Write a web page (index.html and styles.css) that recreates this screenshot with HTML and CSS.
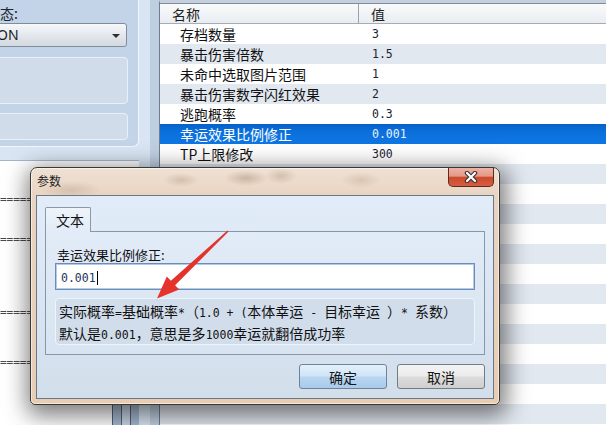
FILE: index.html
```html
<!DOCTYPE html>
<html lang="zh-CN">
<head>
    <meta charset="UTF-8">
    <title>参数</title>
    <link rel="stylesheet" href="styles.css">
</head>
<body>

    <div class="screen">
        <aside class="side">
            <div class="group">
                <div class="group-label">状态:</div>
                <div class="combo"><span class="combo-text">ON</span><span class="combo-arrow"></span></div>
                <div class="group-box tall"></div>
                <div class="group-box"></div>
            </div>
            <div class="editor">
                <div class="rule r1">==========</div>
                <div class="rule r2">==========</div>
                <div class="rule r3">==========</div>
                <div class="rule r4">==========</div>
                <div class="strip"><span></span><span></span><span></span></div>
            </div>
        </aside>

        <div class="splitter"></div>

        <section class="grid">
            <div class="grid-head">
                <div class="col-name">名称</div>
                <div class="col-val">值</div>
            </div>
            <div class="row"><span class="name">存档数量</span><span class="val">3</span></div>
            <div class="row"><span class="name">暴击伤害倍数</span><span class="val">1.5</span></div>
            <div class="row"><span class="name">未命中选取图片范围</span><span class="val">1</span></div>
            <div class="row"><span class="name">暴击伤害数字闪红效果</span><span class="val">2</span></div>
            <div class="row"><span class="name">逃跑概率</span><span class="val">0.3</span></div>
            <div class="row sel"><span class="name">幸运效果比例修正</span><span class="val">0.001</span></div>
            <div class="row"><span class="name">TP上限修改</span><span class="val">300</span></div>
            <div class="row"></div>
            <div class="row"></div>
            <div class="row"></div>
            <div class="row"></div>
            <div class="row"></div>
            <div class="row"></div>
            <div class="row"></div>
            <div class="row"></div>
            <div class="row"></div>
            <div class="row"></div>
            <div class="row"></div>
            <div class="row"></div>
            <div class="row"></div>
        </section>
    </div>

    <!-- dialog window on top -->
    <div class="dialog">
        <div class="titlebar">
            <span class="title">参数</span>
            <span class="close">
                <svg width="16" height="12" viewBox="0 0 16 12">
                    <path d="M4 2 L12 10 M12 2 L4 10" stroke="#3a3a3a" stroke-width="4.5" stroke-linecap="round"/>
                    <path d="M4 2 L12 10 M12 2 L4 10" stroke="#ffffff" stroke-width="2.2" stroke-linecap="round"/>
                </svg>
            </span>
        </div>
        <div class="client">
            <div class="tabs"><span class="tab">文本</span></div>
            <div class="tab-panel">
                <div class="field-label">幸运效果比例修正:</div>
                <div class="textbox"><span class="mono caret">0.001</span></div>
                <div class="info">
                    <div>实际概率<span class="mono">=</span>基础概率<span class="mono">*</span>（<span class="mono">1.0 + (</span>本体幸运<span class="mono"> - </span>目标幸运<span class="mono"> </span>）<span class="mono">* </span>系数）</div>
                    <div>默认是<span class="mono">0.001</span>，意思是多<span class="mono">1000</span>幸运就翻倍成功率</div>
                </div>
            </div>
            <div class="buttons">
                <button class="btn ok">确定</button>
                <button class="btn">取消</button>
            </div>
        </div>
    </div>

    <svg class="arrow" width="606" height="425" viewBox="0 0 606 425">
        <polygon points="227.5,230.4 228.6,231.6 175.1,285.2 179.2,289.5 157,298.5 166.8,276.5 170.9,280.8" fill="#e5332c"/>
    </svg>

</body>
</html>
```

FILE: styles.css
```css
body {
    margin: 0;
    width: 606px;
    height: 425px;
    overflow: hidden;
    position: relative;
    font-family: "Noto Sans CJK SC", sans-serif;
    font-size: 14px;
    color: #111;
}

.mono {
    font-family: "DejaVu Sans Mono", monospace;
    font-size: 11.5px;
    white-space: pre;
}

.screen {
    display: grid;
    grid-template-columns: 150px 9px 1fr;
    height: 425px;
}

/* left side panels */
.side {
    background-color: #d9e5f3;
    display: flex;
    flex-direction: column;
}

.group {
    width: 139px;
    height: 147px;
    box-sizing: border-box;
    background-color: #c3d4e8;
    border-right: 1px solid #f2f7fc;
    border-bottom: 1px solid #f2f7fc;
    border-bottom-right-radius: 6px;
    padding-top: 5px;
}

.group-label {
    line-height: 16px;
    margin-left: -14px;
    color: #1d2530;
}

.combo {
    margin: 2px 0 0 -4px;
    width: 131px;
    height: 24px;
    box-sizing: border-box;
    border: 1px solid #7f8c9c;
    border-radius: 3px;
    background: linear-gradient(#f6f8fa, #e4e8ed 50%, #d3d9e0);
    display: flex;
    align-items: center;
    justify-content: space-between;
    padding: 0 6px 0 0;
}

.combo-text {
    font-family: "Noto Sans", sans-serif;
    font-size: 14px;
    line-height: 22px;
    margin-left: 0;
    color: #1b1b1b;
}

.combo-arrow {
    width: 0;
    height: 0;
    border-left: 4px solid transparent;
    border-right: 4px solid transparent;
    border-top: 4px solid #2e2e2e;
    margin-top: 1px;
}

.group-box {
    margin: 9px 0 0 -4px;
    width: 132px;
    height: 27px;
    box-sizing: border-box;
    background-color: #d1dcea;
    border: 1px solid #e9f0f8;
    border-radius: 4px;
}

.group-box.tall {
    margin-top: 10px;
    height: 47px;
}

.editor {
    margin-top: 13px;
    width: 139px;
    flex: 1;
    background-color: #fff;
    border-top: 1px solid #a3b7cf;
    display: flex;
    flex-direction: column;
}

.rule {
    font-family: "DejaVu Sans Mono", monospace;
    font-size: 11px;
    line-height: 12px;
    height: 12px;
    color: #4a4a4a;
    overflow: hidden;
    white-space: nowrap;
}

.r1 { margin-top: 33px; }
.r2 { margin-top: 28px; }
.r3 { margin-top: 61px; }
.r4 { margin-top: 38px; }

.strip {
    margin-top: auto;
    margin-left: 112px;
    height: 20px;
    display: flex;
}

.strip span {
    width: 12px;
    border-left: 1px solid #556270;
    background-color: #a5b9d1;
}

.strip span:nth-child(2) {
    background-color: #c8d6e6;
}

.splitter {
    background-color: #bfcfe2;
}

/* property grid */
.grid {
    border-left: 1px solid #6e7d8e;
    border-top: 3px solid #c4d0dd;
    background-color: #fff;
}

.grid-head {
    display: flex;
    height: 21px;
    box-sizing: border-box;
    border-top: 1px solid #7f8c9b;
    border-bottom: 1px solid #a3adb9;
    background: linear-gradient(#f9fafb, #e9edf1);
    line-height: 20px;
    color: #1e1e1e;
}

.col-name {
    width: 199px;
    padding-left: 12px;
    box-sizing: border-box;
    border-right: 1px solid #97a3b0;
}

.col-val {
    padding-left: 12px;
}

.row {
    display: flex;
    height: 20px;
    line-height: 20px;
}

.row:nth-child(odd) {
    background-color: #e2e8f0;
}

.row .name {
    width: 200px;
    padding-left: 20px;
    box-sizing: border-box;
}

.row .val {
    padding-left: 12px;
    font-family: "DejaVu Sans Mono", monospace;
    font-size: 11.5px;
    color: #1a2230;
}

.row.sel {
    background: linear-gradient(#0660c8, #0b70dc 40%, #0e76e3);
    color: #fff;
}

.row.sel .val {
    color: #e8f1fc;
}

/* dialog */
.dialog {
    position: absolute;
    left: 30px;
    top: 167px;
    width: 470px;
    height: 238px;
    box-sizing: border-box;
    border: 1px solid #3a3835;
    border-radius: 7px 7px 5px 5px;
    background:
        radial-gradient(ellipse 22px 8px at 215px 10px, rgba(140, 110, 88, .35), transparent),
        radial-gradient(ellipse 18px 7px at 150px 12px, rgba(150, 120, 95, .28), transparent),
        radial-gradient(ellipse 16px 8px at 250px 8px, rgba(150, 120, 95, .3), transparent),
        radial-gradient(ellipse 20px 8px at 330px 12px, rgba(150, 120, 95, .22), transparent),
        radial-gradient(ellipse 30px 9px at 40px 22px, rgba(150, 120, 95, .25), transparent),
        linear-gradient(#efe1d4, #e9d4c2 28px, #e8cdb3);
    box-shadow: inset 0 0 0 1px rgba(255, 255, 255, .55), 2px 6px 22px 5px rgba(0, 0, 0, .5);
    display: flex;
    flex-direction: column;
}

.titlebar {
    height: 27px;
    display: flex;
    align-items: flex-start;
    padding: 0 5px 0 6px;
}

.title {
    font-size: 12px;
    line-height: 16px;
    margin-top: 5px;
    color: #222;
}

.close {
    margin-left: auto;
    width: 46px;
    height: 19px;
    box-sizing: border-box;
    border: 1px solid #5d2a1f;
    border-top: none;
    border-radius: 0 0 5px 5px;
    background: linear-gradient(#eeb2a4, #e49888 45%, #cc4a2e 52%, #d65e40);
    display: flex;
    align-items: center;
    justify-content: center;
}

.client {
    margin: 0 5px 5px 5px;
    flex: 1;
    border: 1px solid #6b7987;
    background: linear-gradient(#e2ecf9, #d9e5f3 50%, #d3deeb);
    padding: 11px 8px 0 8px;
}

.tabs {
    display: flex;
    position: relative;
    z-index: 1;
    margin-bottom: -1px;
}

.tab {
    width: 46px;
    height: 25px;
    box-sizing: border-box;
    border: 1px solid #8b98a7;
    border-bottom: none;
    border-radius: 2px 2px 0 0;
    background: linear-gradient(#eef4fb, #e2ebf7);
    line-height: 24px;
    padding-left: 10px;
}

.tab-panel {
    height: 124px;
    box-sizing: border-box;
    border: 1px solid #8996a5;
    background: linear-gradient(#e2ebf8, #d8e4f1);
    padding: 15px 9px 0 9px;
}

.field-label {
    font-size: 13px;
    line-height: 16px;
    padding-left: 2px;
}

.textbox {
    height: 27px;
    box-sizing: border-box;
    border: 1px solid #6c8db5;
    box-shadow: inset 0 0 0 1px #b3cbe7;
    background-color: #fff;
    padding-left: 5px;
    line-height: 25px;
    color: #1f355c;
}

.caret {
    border-right: 1px solid #000;
    padding-right: 1px;
}

.info {
    margin-top: 8px;
    height: 47px;
    box-sizing: border-box;
    border: 1px solid #eef4fb;
    border-radius: 4px;
    background-color: #d1ddeb;
    padding: 2px 0 0 3px;
    line-height: 20px;
}

.buttons {
    display: flex;
    justify-content: flex-end;
    gap: 10px;
    margin-top: 9px;
}

.btn {
    width: 88px;
    height: 25px;
    border: 1px solid #737b84;
    border-radius: 3px;
    background: linear-gradient(#f3f3f3, #ebebeb 48%, #dcdcdc 52%, #cfcfcf);
    font-family: "Noto Sans CJK SC", sans-serif;
    font-size: 14px;
    line-height: 20px;
    color: #151515;
    padding: 0;
}

.btn.ok {
    border-color: #6f8397;
    background: linear-gradient(#e4f0fb, #cfe4f6 48%, #b8d6f1 52%, #a7cbec);
}

.arrow {
    position: absolute;
    left: 0;
    top: 0;
    pointer-events: none;
}
```
